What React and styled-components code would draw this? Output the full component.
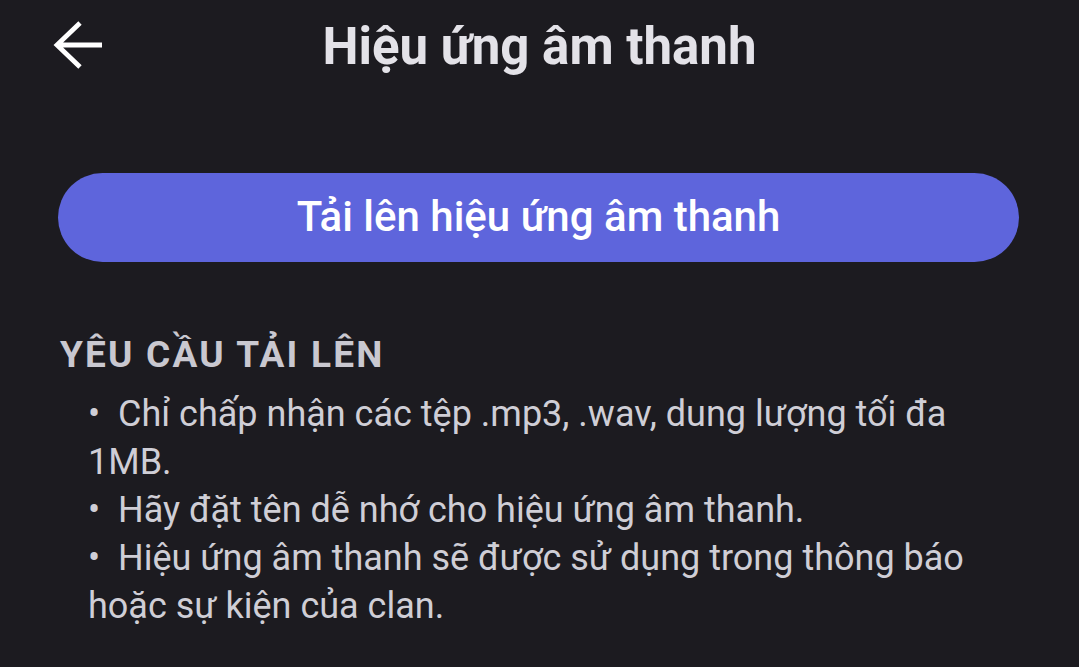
import React from 'react';
import styled, { createGlobalStyle } from 'styled-components';

const rules = [
  'Chỉ chấp nhận các tệp .mp3, .wav, dung lượng tối đa 1MB.',
  'Hãy đặt tên dễ nhớ cho hiệu ứng âm thanh.',
  'Hiệu ứng âm thanh sẽ được sử dụng trong thông báo hoặc sự kiện của clan.',
];

const GlobalStyle = createGlobalStyle`
  html, body {
    margin: 0;
    padding: 0;
    background: #1c1b20;
    font-family: Roboto, 'Noto Sans', sans-serif;
  }
`;

const Screen = styled.div`
  width: 1079px;
  height: 667px;
  background: #1c1b20;
  overflow: hidden;
`;

const Header = styled.div`
  position: relative;
  height: 96px;
  display: flex;
  align-items: center;
  justify-content: center;
`;

const BackButton = styled.button`
  position: absolute;
  left: 50px;
  top: 19px;
  width: 56px;
  height: 56px;
  padding: 0;
  border: none;
  background: transparent;
  display: flex;
  align-items: center;
  justify-content: center;
`;

const Title = styled.h1`
  margin: 0;
  margin-top: -4px;
  font-size: 51px;
  font-weight: 700;
  color: #e3e2e8;
`;

const Body = styled.div`
  padding: 77px 60px 0 58px;
`;

const UploadButton = styled.button`
  width: 961px;
  height: 89px;
  border: none;
  border-radius: 45px;
  background: #5e65dc;
  color: #ffffff;
  font-family: Roboto, sans-serif;
  font-size: 42px;
  font-weight: 500;
  display: flex;
  align-items: center;
  justify-content: center;
  padding: 0 0 2px;
`;

const SectionTitle = styled.h2`
  margin: 69px 0 0 2px;
  font-size: 37px;
  font-weight: 700;
  letter-spacing: 2.2px;
  color: #c9c8d0;
  line-height: 48px;
`;

const RuleList = styled.ul`
  list-style: none;
  margin: 11px 0 0 30px;
  padding: 0;
  width: 900px;
`;

const Rule = styled.li`
  font-size: 36px;
  line-height: 48px;
  color: #cfced6;
`;

const Bullet = styled.span`
  display: inline-block;
  width: 30px;
`;

const BackIcon = () => (
  <svg width="52" height="52" viewBox="0 0 52 52" fill="none">
    <path d="M50 24H5M28 2L5 24L28 46" stroke="#ffffff" strokeWidth="4.8" />
  </svg>
);

export default function App() {
  return (
    <Screen>
      <GlobalStyle />
      <Header>
        <BackButton>
          <BackIcon />
        </BackButton>
        <Title>Hiệu ứng âm thanh</Title>
      </Header>
      <Body>
        <UploadButton>Tải lên hiệu ứng âm thanh</UploadButton>
        <SectionTitle>YÊU CẦU TẢI LÊN</SectionTitle>
        <RuleList>
          {rules.map((r) => (
            <Rule key={r}>
              <Bullet>•</Bullet>
              {r}
            </Rule>
          ))}
        </RuleList>
      </Body>
    </Screen>
  );
}
